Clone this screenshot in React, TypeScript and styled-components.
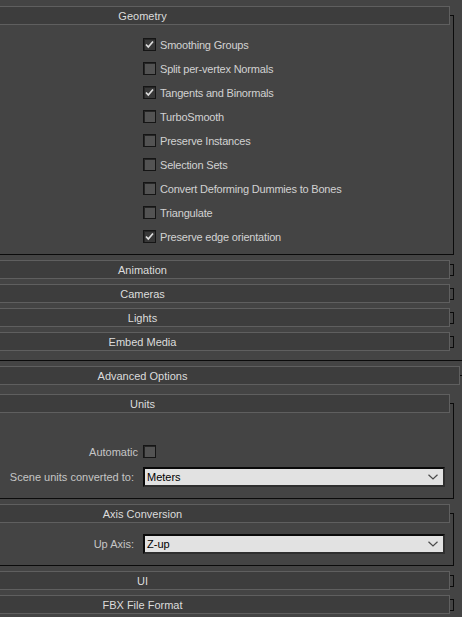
import React from "react";
import styled, { createGlobalStyle } from "styled-components";

const GlobalStyle = createGlobalStyle`
  html, body {
    margin: 0;
    padding: 0;
    background: #444444;
    overflow: hidden;
  }
  body {
    font-family: "Liberation Sans", Arial, sans-serif;
    font-size: 11px;
  }
`;

// the panel is wider than the window and scrolled, so it starts left of the view
const Panel = styled.div`
  width: 643px;
  margin-left: -179px;
  height: 617px;
`;

const OuterFrame = styled.div<{ $cut?: boolean }>`
  display: flex;
  flex-direction: column;
  border: 1px solid #0b0b0b;
  border-top: ${(p) => (p.$cut ? "none" : "1px solid #0b0b0b")};
  margin-top: ${(p) => (p.$cut ? 0 : 14)}px;
  padding: 0 3px 4px;
`;

const Header = styled.div<{ $collapsed?: boolean }>`
  height: 19px;
  box-sizing: border-box;
  border: 1px solid #5f5f5f;
  background: #3d3d3d;
  color: #dcdcdc;
  display: flex;
  align-items: center;
  justify-content: center;
  line-height: 17px;
  padding-top: 1px;
  margin: ${(p) => (p.$collapsed ? "-5px 0 -4px" : "-10px 0 0")};
`;

const RolloutList = styled.div<{ $top: number }>`
  display: flex;
  flex-direction: column;
  padding: ${(p) => p.$top}px 6px 0;
`;

const Frame = styled.div<{ $collapsed?: boolean }>`
  display: flex;
  flex-direction: column;
  border: 1px solid #0b0b0b;
  padding: 0 3px;
  margin-top: ${(p) => (p.$collapsed ? 4 : 9)}px;
  margin-bottom: ${(p) => (p.$collapsed ? 8 : 5)}px;
`;

const Body = styled.div<{ $top: number; $bottom: number; $gap?: number }>`
  display: flex;
  flex-direction: column;
  gap: ${(p) => p.$gap ?? 0}px;
  padding: ${(p) => p.$top}px 5px ${(p) => p.$bottom}px 0;
`;

const FormRow = styled.div<{ $height: number; $tight?: boolean }>`
  display: grid;
  grid-template-columns: 1fr 302px;
  column-gap: ${(p) => (p.$tight ? 5 : 9)}px;
  align-items: center;
  height: ${(p) => p.$height}px;
`;

const FieldLabel = styled.span`
  text-align: right;
  color: #c6c6c6;
  white-space: nowrap;
`;

const CheckLine = styled.label`
  display: flex;
  align-items: center;
  gap: 4px;
  color: #d2d2d2;
  letter-spacing: -0.2px;
  white-space: nowrap;
  margin-top: -1px;
`;

const Box = styled.span<{ $on?: boolean }>`
  width: 13px;
  height: 13px;
  box-sizing: border-box;
  border: 1px solid #151515;
  box-shadow: inset 1px 1px 0 #262626;
  background: ${(p) => (p.$on ? "#383838" : "#535353")};
  display: flex;
  align-items: center;
  justify-content: center;
  flex: none;
`;

const Select = styled.div`
  height: 20px;
  box-sizing: border-box;
  border-top: 2px solid #0a0a0a;
  border-left: 2px solid #0a0a0a;
  border-right: 2px solid #2f2f2f;
  border-bottom: 2px solid #2f2f2f;
  background: #e2e2e2;
  color: #000;
  display: flex;
  align-items: center;
  justify-content: space-between;
  padding: 0 5px 0 2px;
`;

function CheckBox({ on }: { on?: boolean }) {
  return (
    <Box $on={on}>
      {on && (
        <svg width="11" height="11" viewBox="0 0 11 11">
          <path d="M2 5.5 L4.3 8 L9 2.5" fill="none" stroke="#dedede" strokeWidth="1.7" />
        </svg>
      )}
    </Box>
  );
}

function Dropdown({ value }: { value: string }) {
  return (
    <Select>
      <span>{value}</span>
      <svg width="10" height="6" viewBox="0 0 10 6">
        <polyline points="0.5,0.8 5,5 9.5,0.8" fill="none" stroke="#4a4a4a" strokeWidth="1.2" />
      </svg>
    </Select>
  );
}

function Collapsed({ title }: { title: string }) {
  return (
    <Frame $collapsed>
      <Header $collapsed>{title}</Header>
    </Frame>
  );
}

const geometryOptions: [string, boolean][] = [
  ["Smoothing Groups", true],
  ["Split per-vertex Normals", false],
  ["Tangents and Binormals", true],
  ["TurboSmooth", false],
  ["Preserve Instances", false],
  ["Selection Sets", false],
  ["Convert Deforming Dummies to Bones", false],
  ["Triangulate", false],
  ["Preserve edge orientation", true],
];

export default function App() {
  return (
    <>
      <GlobalStyle />
      <Panel>
        <OuterFrame $cut>
          <RolloutList $top={6}>
            <Frame>
              <Header>Geometry</Header>
              <Body $top={8} $bottom={5}>
                {geometryOptions.map(([label, on]) => (
                  <FormRow key={label} $height={24}>
                    <span />
                    <CheckLine>
                      <CheckBox on={on} />
                      {label}
                    </CheckLine>
                  </FormRow>
                ))}
              </Body>
            </Frame>
            <Collapsed title="Animation" />
            <Collapsed title="Cameras" />
            <Collapsed title="Lights" />
            <Collapsed title="Embed Media" />
          </RolloutList>
        </OuterFrame>

        <OuterFrame>
          <Header>Advanced Options</Header>
          <RolloutList $top={9}>
            <Frame>
              <Header>Units</Header>
              <Body $top={29} $bottom={11} $gap={5}>
                <FormRow $height={20} $tight>
                  <FieldLabel>Automatic</FieldLabel>
                  <CheckLine>
                    <CheckBox />
                  </CheckLine>
                </FormRow>
                <FormRow $height={20}>
                  <FieldLabel>Scene units converted to:</FieldLabel>
                  <Dropdown value="Meters" />
                </FormRow>
              </Body>
            </Frame>
            <Frame>
              <Header>Axis Conversion</Header>
              <Body $top={11} $bottom={11}>
                <FormRow $height={20}>
                  <FieldLabel>Up Axis:</FieldLabel>
                  <Dropdown value="Z-up" />
                </FormRow>
              </Body>
            </Frame>
            <Collapsed title="UI" />
            <Collapsed title="FBX File Format" />
          </RolloutList>
        </OuterFrame>
      </Panel>
    </>
  );
}
